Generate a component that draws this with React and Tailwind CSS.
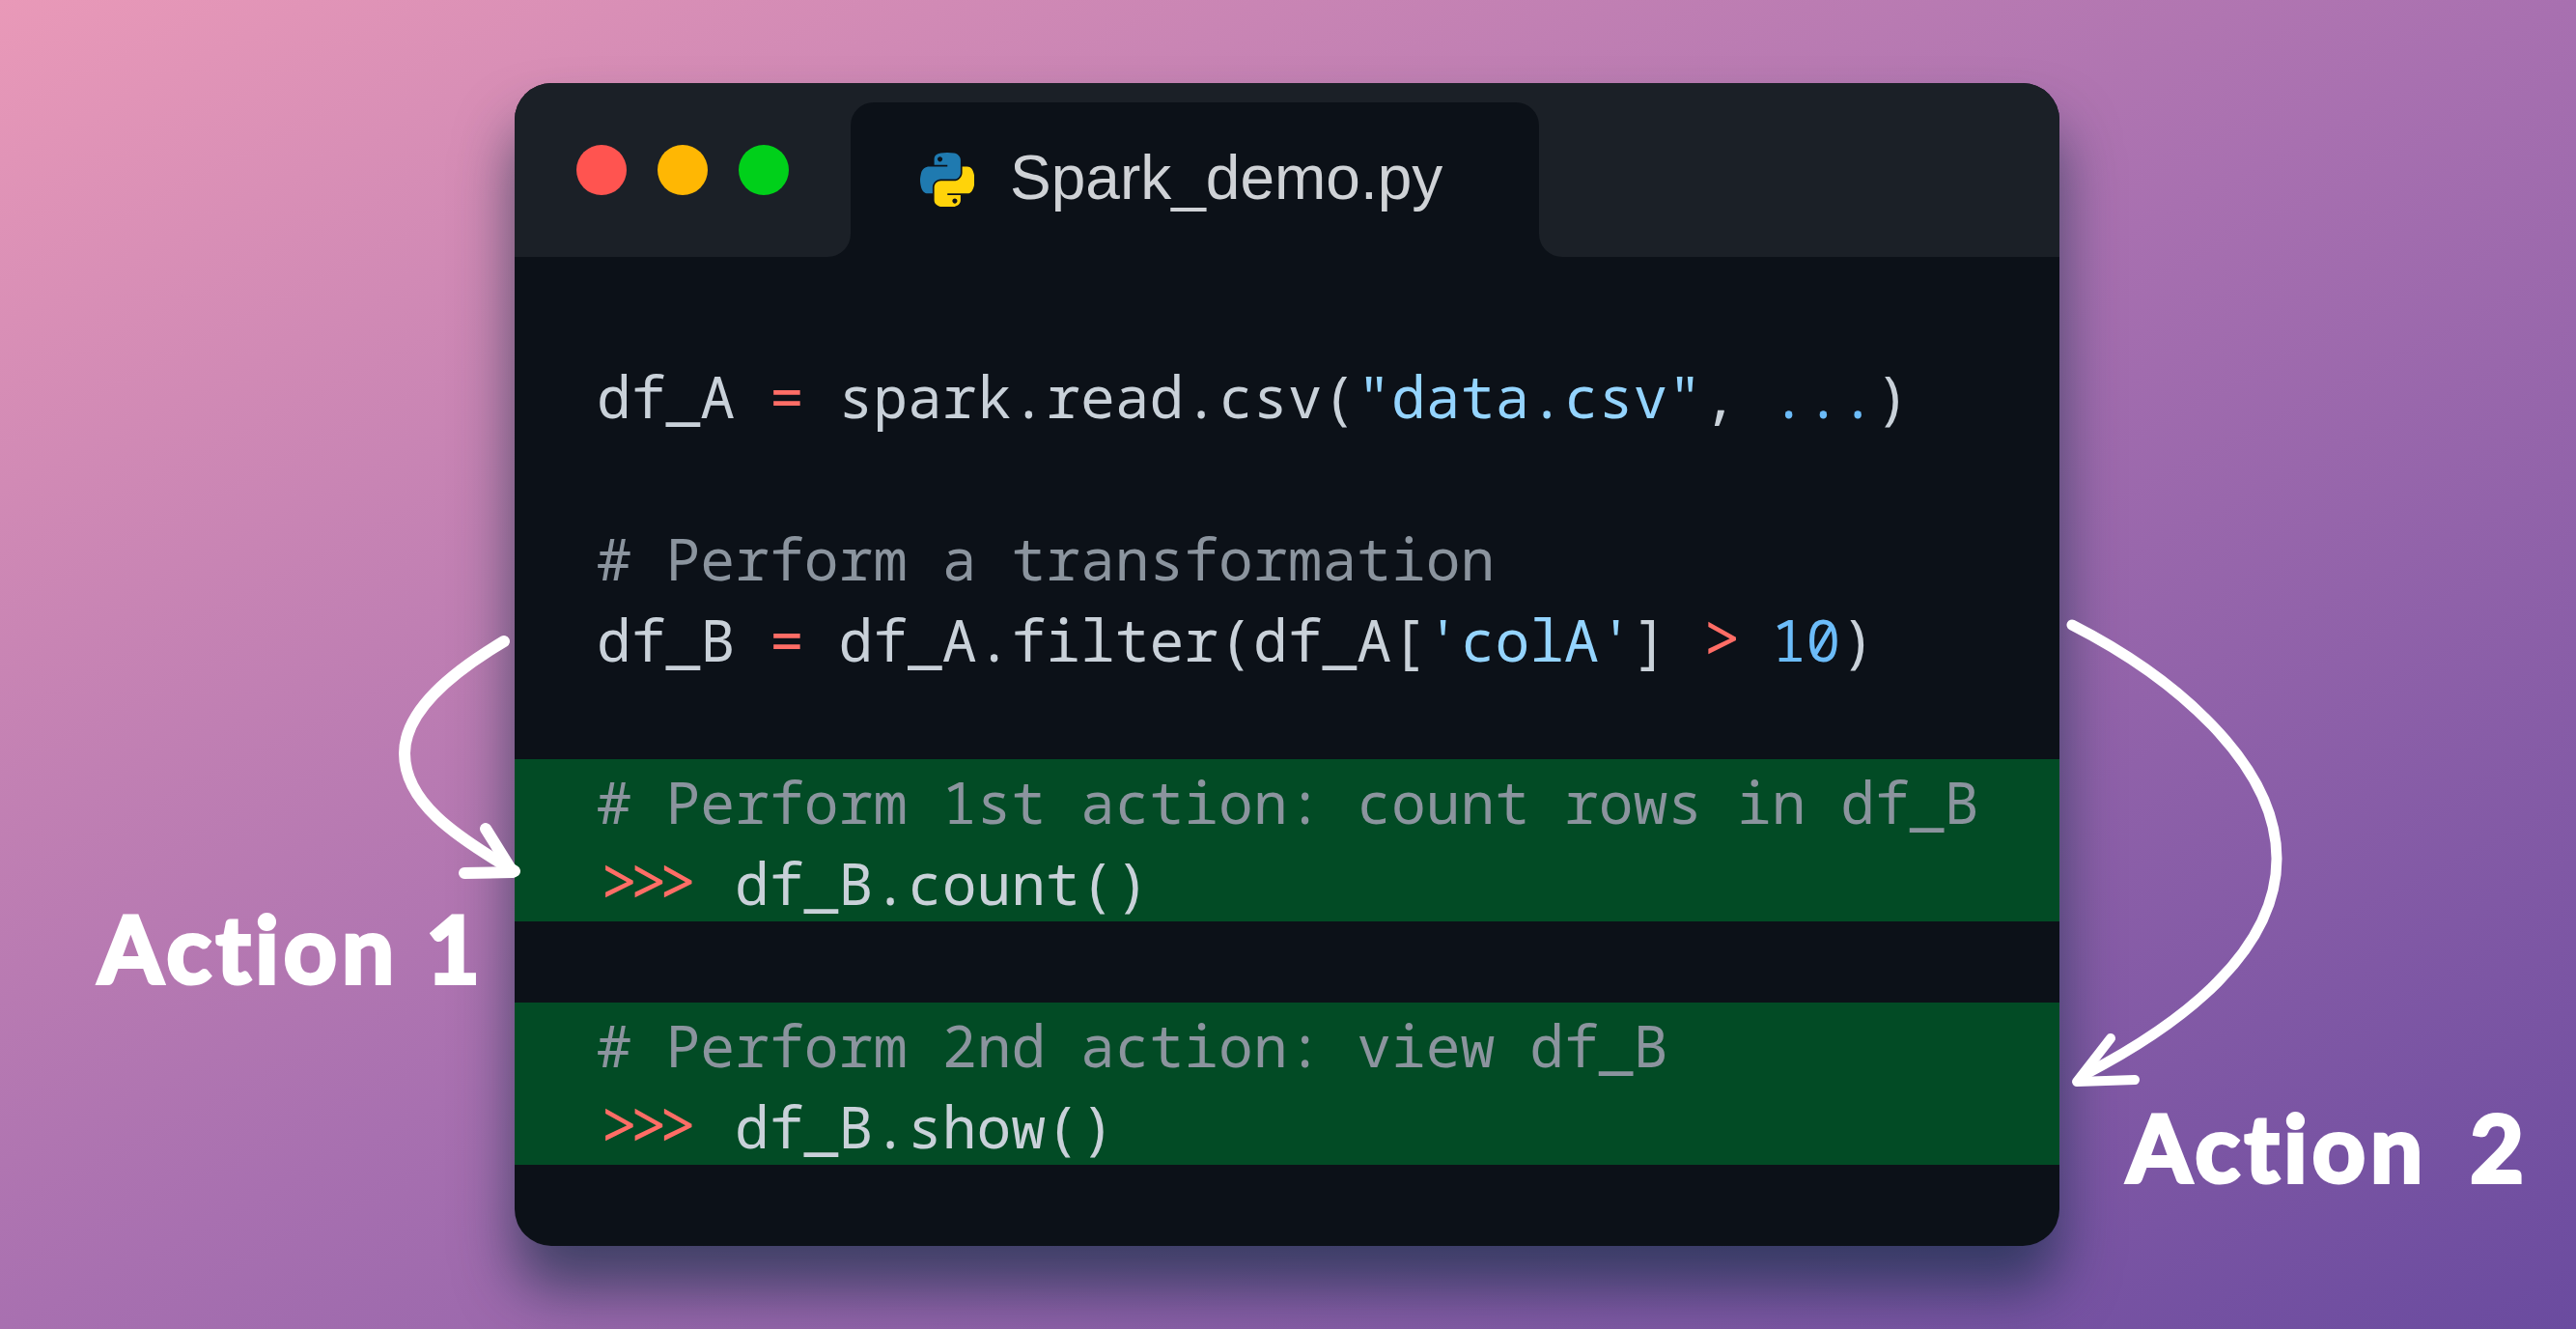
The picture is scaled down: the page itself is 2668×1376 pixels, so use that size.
import React from 'react';

const Red = ({ children }) => <span className="text-[#ff6d66]">{children}</span>;
const Str = ({ children }) => <span className="text-[#94d4ff]">{children}</span>;
const Num = ({ children }) => <span className="text-[#6cbcf9]">{children}</span>;

const Line = ({ children, className = '' }) => (
  <div className={`h-[84px] pl-[85px] whitespace-pre leading-[88px] ${className}`}>{children}</div>
);

const Prompt = () => (
  <span className="inline-block w-[143px] pl-[3px] text-[68px] leading-[60px] tracking-[-10.4px] text-[#ff6d66]">&gt;&gt;&gt;</span>
);

const PythonLogo = () => (
  <svg viewBox="0 0 110 110" className="h-[56px] w-[56px] shrink-0">
    <path
      fill="#1f7ab0"
      d="M54.919 0c-4.584.022-8.961.413-12.813 1.095C30.76 3.099 28.7 7.295 28.7 15.032v10.219h26.813v3.406H18.638c-7.793 0-14.616 4.684-16.75 13.594-2.462 10.213-2.571 16.586 0 27.25 1.906 7.938 6.457 13.594 14.25 13.594h9.218v-12.25c0-8.85 7.657-16.656 16.75-16.656h26.782c7.454 0 13.406-6.138 13.406-13.625v-25.531c0-7.266-6.13-12.725-13.406-13.937C64.282.328 59.502-.02 54.918 0zm-14.5 8.219c2.77 0 5.031 2.299 5.031 5.125 0 2.816-2.262 5.093-5.031 5.093-2.78 0-5.031-2.277-5.031-5.093 0-2.826 2.251-5.125 5.031-5.125z"
    />
    <path
      fill="#ffd30a"
      d="M85.638 28.657v11.906c0 9.231-7.826 17-16.75 17H42.106c-7.336 0-13.406 6.279-13.406 13.625v25.531c0 7.266 6.319 11.54 13.406 13.625 8.488 2.496 16.627 2.947 26.782 0 6.75-1.954 13.406-5.888 13.406-13.625V86.5H55.513v-3.405H95.7c7.793 0 10.696-5.436 13.406-13.594 2.8-8.399 2.68-16.476 0-27.25-1.925-7.758-5.604-13.594-13.406-13.594zM70.575 93.313c2.78 0 5.031 2.278 5.031 5.094 0 2.827-2.251 5.125-5.031 5.125-2.77 0-5.031-2.298-5.031-5.125 0-2.816 2.261-5.094 5.031-5.094z"
    />
  </svg>
);

// hand drawn arrows, in page coordinates
const Arrows = () => (
  <svg viewBox="0 0 2668 1376" className="absolute inset-0 h-full w-full" fill="none" stroke="#fff" strokeLinecap="round" strokeLinejoin="round">
    <path strokeWidth="12" d="M522 664C470 695 419 735 419 780C419 830 470 865 533 902" />
    <path strokeWidth="12" d="M503 858L531 903L481 904" />
    <path strokeWidth="11" d="M2146 647C2250 700 2358 790 2358 889C2358 985 2260 1060 2160 1112" />
    <path strokeWidth="10" d="M2186 1075L2151 1120L2211 1118" />
  </svg>
);

export default function App() {
  return (
    <div className="relative h-[1376px] w-full overflow-hidden bg-[linear-gradient(to_bottom_right,#e999b8,#a870b0_50%,#6a4b9f)] pl-[533px] pt-[86px]">
      <div className="h-[1204px] w-[1600px] overflow-hidden rounded-[38px] bg-[#0c1118] shadow-[0_44px_60px_rgba(8,40,60,0.62)]">
        <div className="flex h-[180px]">
          <div className="flex w-[348px] gap-[32px] rounded-br-[24px] bg-[#1b2027] pl-[64px] pt-[64px]">
            <div className="h-[52px] w-[52px] rounded-full bg-[#ff5450]" />
            <div className="h-[52px] w-[52px] rounded-full bg-[#ffb703]" />
            <div className="h-[52px] w-[52px] rounded-full bg-[#00d01a]" />
          </div>
          <div className="w-[713px] bg-[#1b2027] pt-[20px]">
            <div className="flex h-full items-start gap-[37px] rounded-t-[24px] bg-[#0c1118] pl-[72px] pt-[52px]">
              <PythonLogo />
              <span className="-mt-[6px] font-['Liberation_Sans',sans-serif] text-[64px] leading-[64px] text-[#cfd2d6]">Spark_demo.py</span>
            </div>
          </div>
          <div className="flex-1 rounded-bl-[24px] bg-[#1b2027]" />
        </div>

        <div className="pt-[100px] font-['Noto_Sans_Mono','DejaVu_Sans_Mono',monospace] text-[59.65px] text-[#c9d1d9]">
          <Line>
            df_A <Red>=</Red> spark.read.csv(<Str>"data.csv"</Str>, <Num>...</Num>)
          </Line>
          <Line />
          <Line className="text-[#8b949e]"># Perform a transformation</Line>
          <Line>
            df_B <Red>=</Red> df_A.filter(df_A[<Str>'colA'</Str>] <span className="text-[68px] leading-[60px] tracking-[-5px] text-[#ff6d66]">&gt;</span> <Num>10</Num>)
          </Line>
          <Line />
          <div className="bg-[#024b25]">
            <Line className="text-[#8b949e]"># Perform 1st action: count rows in df_B</Line>
            <Line>
              <Prompt />df_B.count()
            </Line>
          </div>
          <Line />
          <div className="bg-[#024b25]">
            <Line className="text-[#8b949e]"># Perform 2nd action: view df_B</Line>
            <Line>
              <Prompt />df_B.show()
            </Line>
          </div>
        </div>
      </div>

      <Arrows />
      <div className="absolute left-[102px] top-[925px] font-['Lato',sans-serif] text-[96px] font-bold leading-[112px] tracking-[5px] text-white [word-spacing:0px] [-webkit-text-stroke:4px_white]">Action 1</div>
      <div className="absolute left-[2203px] top-[1131px] font-['Lato',sans-serif] text-[96px] font-bold leading-[112px] tracking-[5px] text-white [word-spacing:16px] [-webkit-text-stroke:4px_white]">Action 2</div>
    </div>
  );
}
